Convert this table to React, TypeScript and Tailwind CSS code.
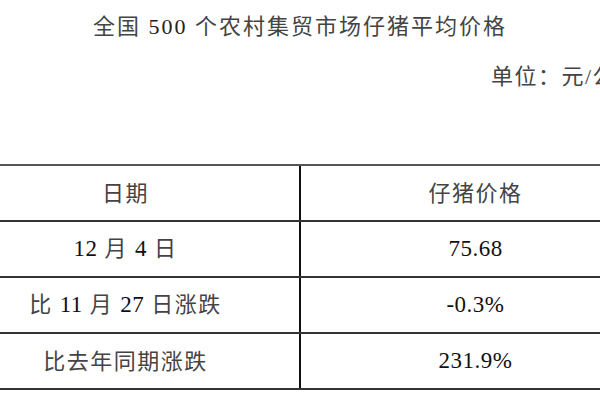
const rows = [
  ['日期', '仔猪价格'],
  ['12 月 4 日', '75.68'],
  ['比 11 月 27 日涨跌', '-0.3%'],
  ['比去年同期涨跌', '231.9%'],
];

// numbers are set darker and a touch larger than the Chinese text
const Mixed = ({ text }: { text: string }) => (
  <span>
    {text.split(/([0-9.%\-]+)/).map((part, i) =>
      /^[0-9.%\-]+$/.test(part) ? (
        <span key={i} className="text-[23px] tracking-[0.5px] text-[#111]">
          {part}
        </span>
      ) : (
        part
      )
    )}
  </span>
);

export default function App() {
  return (
    <div className="w-[600px] h-[400px] overflow-hidden bg-white text-[#444] font-['Liberation_Serif','Noto_Sans_CJK_SC',serif]">
      <div className="pl-[93px] pt-[13px] h-[41px] leading-[28px] text-[22px] tracking-[2px] whitespace-nowrap">
        全国 <span className="text-[#222]">500</span> 个农村集贸市场仔猪平均价格
      </div>
      <div className="pl-[491px] mt-[22px] h-[28px] leading-[28px] text-[22px] tracking-[1.5px] whitespace-nowrap overflow-hidden">
        单位：元/公斤
      </div>
      <div className="mt-[73px] ml-[-48px] w-[698px] border-t-2 border-[#555]">
        {rows.map(([a, b], i) => (
          <div key={i} className="grid grid-cols-[349px_349px] border-b-2 border-[#333]">
            <div className="h-[54px] flex items-center justify-center border-r-2 border-[#111] text-[22px] tracking-[1.5px] whitespace-pre">
              <Mixed text={a} />
            </div>
            <div className="h-[54px] flex items-center justify-center text-[22px] tracking-[1.5px] whitespace-pre">
              <Mixed text={b} />
            </div>
          </div>
        ))}
      </div>
    </div>
  );
}
